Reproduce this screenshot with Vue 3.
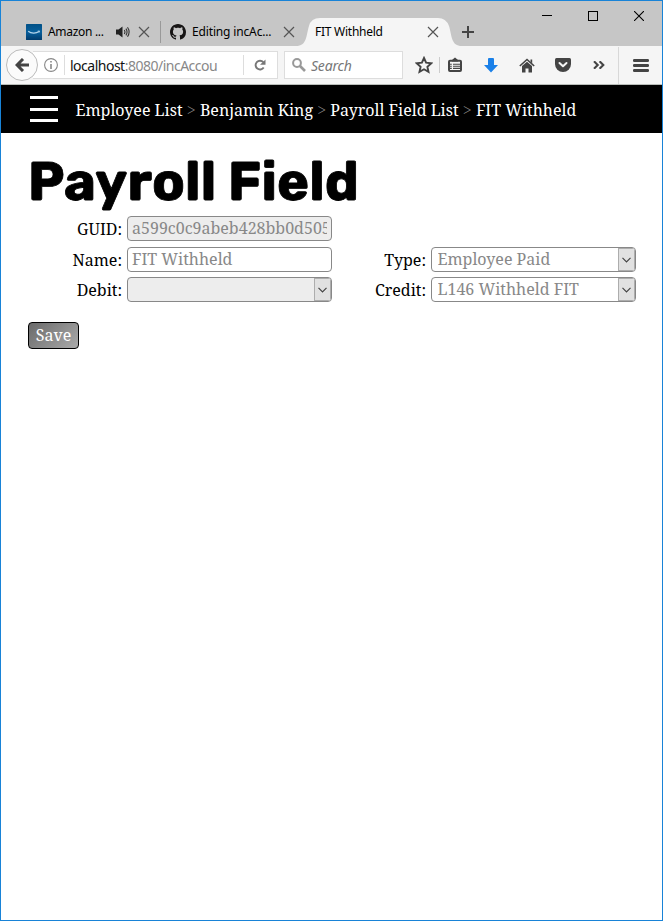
<script setup>
const tabs = [
  { title: 'Amazon ...', icon: 'amazon', audio: true },
  { title: 'Editing incAc...', icon: 'github', audio: false },
]
const crumbs = ['Employee List', 'Benjamin King', 'Payroll Field List', 'FIT Withheld']
</script>

<template>
  <div class="window">
    <header class="titlebar">
      <div v-for="t in tabs" :key="t.icon" class="tab" :class="t.icon">
        <svg v-if="t.icon === 'amazon'" class="fav" width="16" height="16" viewBox="0 0 16 16">
          <defs><linearGradient id="az" x1="0" y1="0" x2="0" y2="1"><stop offset="0" stop-color="#005086" /><stop offset=".5" stop-color="#075f9c" /><stop offset="1" stop-color="#003b6c" /></linearGradient></defs>
          <rect width="16" height="16" rx=".5" fill="url(#az)" />
          <path d="M2.2 7.2C5.2 9.6 10 9.6 13 7.6" fill="none" stroke="#b4d4ea" stroke-width="1.2" /><path d="M11.8 7h1.9l-.6 1.6" fill="none" stroke="#b4d4ea" stroke-width=".8" />
        </svg>
        <svg v-else class="fav" width="16" height="16" viewBox="0 0 16 16">
          <path fill="#171515" d="M8 0C3.58 0 0 3.58 0 8c0 3.54 2.29 6.53 5.47 7.59.4.07.55-.17.55-.38 0-.19-.01-.82-.01-1.49-2.01.37-2.53-.49-2.69-.94-.09-.23-.48-.94-.82-1.13-.28-.15-.68-.52-.01-.53.63-.01 1.08.58 1.23.82.72 1.21 1.87.87 2.33.66.07-.52.28-.87.51-1.07-1.78-.2-3.64-.89-3.64-3.95 0-.87.31-1.59.82-2.15-.08-.2-.36-1.02.08-2.12 0 0 .67-.21 2.2.82.64-.18 1.32-.27 2-.27s1.36.09 2 .27c1.53-1.04 2.2-.82 2.2-.82.44 1.1.16 1.92.08 2.12.51.56.82 1.27.82 2.15 0 3.07-1.87 3.75-3.65 3.95.29.25.54.73.54 1.48 0 1.07-.01 1.93-.01 2.2 0 .21.15.46.55.38A8.01 8.01 0 0 0 16 8c0-4.42-3.58-8-8-8z" />
        </svg>
        <span class="title">{{ t.title }}</span>
        <svg v-if="t.audio" class="audio" width="14" height="12" viewBox="0 0 14 12">
          <path d="M0 3.5h2.5L6.5.5v11l-4-3H0z" fill="#222" />
          <path d="M8.3 4q1.3 2 0 4M9.9 2.6q2.3 3.4 0 6.8M11.5 1.3q3.2 4.7 0 9.4" fill="none" stroke="#333" stroke-width="1.1" />
        </svg>
        <svg class="x" width="12" height="12" viewBox="0 0 12 12"><path d="M1 1l10 10M11 1L1 11" stroke="#555" stroke-width="1.2" /></svg>
      </div>
      <div class="active">
        <svg class="shape" width="166" height="28" viewBox="0 0 166 28"><path d="M0 28C11 28 10 18 13 8Q15 0 24 0H142Q150 0 153 8C156 18 155 28 166 28z" fill="#f5f5f5" /></svg>
        <span class="title">FIT Withheld</span>
        <svg class="x" width="12" height="12" viewBox="0 0 12 12"><path d="M1 1l10 10M11 1L1 11" stroke="#555" stroke-width="1.2" /></svg>
      </div>
      <svg class="plus" width="12" height="12" viewBox="0 0 12 12"><path d="M6 0v12M0 6h12" stroke="#444" stroke-width="2" /></svg>
      <div class="controls">
        <svg width="10" height="10" viewBox="0 0 10 10"><path d="M0 4.5h10" stroke="#000" /></svg>
        <svg width="10" height="10" viewBox="0 0 10 10"><rect x=".5" y=".5" width="9" height="9" fill="none" stroke="#000" /></svg>
        <svg width="10" height="10" viewBox="0 0 10 10"><path d="M0 0l10 10M10 0L0 10" stroke="#000" stroke-width="1.1" /></svg>
      </div>
    </header>

    <div class="toolbar">
      <div class="back">
        <svg width="14" height="14" viewBox="0 0 14 14"><path d="M8 1L2 7l6 6M2 7h12" fill="none" stroke="#444" stroke-width="3" /></svg>
      </div>
      <div class="url">
        <svg class="info" width="14" height="14" viewBox="0 0 14 14"><circle cx="7" cy="7" r="6.4" fill="none" stroke="#888" stroke-width="1.1" /><path d="M7 3v1.6M7 6v5" stroke="#777" stroke-width="1.4" /></svg>
        <span class="address"><b>localhost</b>:8080/incAccou</span>
        <span class="reload">
          <svg width="12" height="12" viewBox="0 0 12 12"><path d="M9.3 3.2A4.4 4.4 0 1 0 9.7 8.5" fill="none" stroke="#777" stroke-width="1.9" /><path d="M11.5.5v5.2H6z" fill="#777" /></svg>
        </span>
      </div>
      <div class="search">
        <svg width="14" height="14" viewBox="0 0 14 14"><circle cx="5" cy="5" r="3.9" fill="none" stroke="#999" stroke-width="2" /><path d="M8 8l5 5" stroke="#999" stroke-width="2.6" /></svg>
        <span class="hint">Search</span>
      </div>
      <div class="icons">
        <svg width="18" height="18" viewBox="0 0 18 18"><path d="M9 2l2.1 4.7 5.2.6-3.9 3.5 1.1 5.1L9 13.3l-4.5 2.6 1.1-5.1-3.9-3.5 5.2-.6z" fill="none" stroke="#444" stroke-width="1.9" /></svg>
        <i class="sep"></i>
        <svg class="clip" width="14" height="16" viewBox="0 0 14 16"><rect x="1" y="3.8" width="12" height="10.2" rx="1" fill="none" stroke="#444" stroke-width="2" /><path d="M4 3L7 .5 10 3v1.5H4z" fill="#444" /><path d="M2 7.2h1.8M5 7.2h7M2 9.3h1.8M5 9.3h7M2 11.4h1.8M5 11.4h7" stroke="#444" stroke-width="1.1" /></svg>
        <svg class="down" width="14" height="15" viewBox="0 0 14 15"><path d="M4 1q0-1 1-1h4q1 0 1 1v6h4l-7 7.5L0 7h4z" fill="#1a80e8" /></svg>
        <svg class="home" width="16" height="15" viewBox="0 0 16 15"><path d="M.8 8L8 1.5 15.2 8" fill="none" stroke="#444" stroke-width="1.6" /><path d="M11.5 1.5h1.7v4l-1.7-1.6z" fill="#444" /><path d="M3 8l5-4.3L13 8v6.5H9.5v-4h-3v4H3z" fill="#444" /></svg>
        <svg class="pocket" width="16" height="14" viewBox="0 0 16 14"><path d="M1.5 0h13Q16 0 16 1.5V6a8 8 0 0 1-16 0V1.5Q0 0 1.5 0z" fill="#444" /><path d="M4.5 5L8 8.3 11.5 5" fill="none" stroke="#f5f5f5" stroke-width="2" stroke-linecap="round" stroke-linejoin="round" /></svg>
        <svg class="more" width="12" height="8" viewBox="0 0 12 8"><path d="M1 .3L4.7 4 1 7.7M6.6.3L10.3 4 6.6 7.7" fill="none" stroke="#444" stroke-width="2.1" /></svg>
        <i class="sep tall"></i>
        <svg class="menu" width="16" height="13" viewBox="0 0 16 13"><path d="M1.3 1.5h13.4M1.3 6.5h13.4M1.3 11.5h13.4" stroke="#444" stroke-width="2.8" stroke-linecap="round" /></svg>
      </div>
    </div>

    <nav class="crumbs">
      <div class="burger"><i></i><i></i><i></i></div>
      <p>
        <template v-for="(c, i) in crumbs" :key="c"><em v-if="i">&gt;</em><a>{{ c }}</a></template>
      </p>
    </nav>

    <main>
      <h1>Payroll Field</h1>
      <form>
        <div class="row guid">
          <label>GUID:</label>
          <div class="field off"><span class="text">a599c0c9abeb428bb0d505</span></div>
        </div>
        <div class="row">
          <label>Name:</label>
          <div class="field"><span class="text">FIT Withheld</span></div>
          <label>Type:</label>
          <div class="field select"><span class="text">Employee Paid</span><span class="arrow"><svg width="9" height="6" viewBox="0 0 9 6"><path d="M.5.8l4 4 4-4" fill="none" stroke="#444" stroke-width="1.2" /></svg></span></div>
        </div>
        <div class="row">
          <label>Debit:</label>
          <div class="field select off"><span class="text"></span><span class="arrow"><svg width="9" height="6" viewBox="0 0 9 6"><path d="M.5.8l4 4 4-4" fill="none" stroke="#444" stroke-width="1.2" /></svg></span></div>
          <label>Credit:</label>
          <div class="field select"><span class="text">L146 Withheld FIT</span><span class="arrow"><svg width="9" height="6" viewBox="0 0 9 6"><path d="M.5.8l4 4 4-4" fill="none" stroke="#444" stroke-width="1.2" /></svg></span></div>
        </div>
        <button type="button">Save</button>
      </form>
    </main>
  </div>
</template>

<style>
body { background: #fff; }
</style>

<style scoped>
* { box-sizing: border-box; }
svg { display: block; flex: none; }
.window {
  width: 663px; height: 921px; border: 1px solid #1883d7; background: #fff; overflow: hidden;
  font-family: "Noto Serif", "Droid Serif", "DejaVu Serif Condensed", "DejaVu Serif", serif;
}
.titlebar { height: 45px; background: #c6c6c6; display: flex; align-items: flex-end; font: 12px/28px "Noto Sans", sans-serif; color: #000; }
.tab { height: 28px; display: flex; align-items: center; flex: none; white-space: nowrap; }
.amazon { width: 160px; padding-left: 25px; border-right: 1px solid #999; height: 22px; margin-bottom: 3px; }
.github { width: 137px; padding-left: 9px; }
.fav { margin-right: 6px; }
.amazon .title { width: 68px; letter-spacing: -.3px; }
.github .title { width: 91px; margin-right: 1px; letter-spacing: -.15px; }
.audio { margin-right: 8px; }
.github .title + .x { margin-left: -1px; }
.active { position: relative; z-index: 1; width: 166px; height: 28px; flex: none; display: flex; align-items: center; margin-left: -2px; }
.shape { position: absolute; inset: 0; }
.active .title { position: relative; margin-left: 19px; width: 112px; letter-spacing: -.25px; }
.active .x { position: relative; }
.plus { margin: 0 0 8px 0; }
.controls { margin-left: auto; align-self: flex-start; display: flex; gap: 36px; padding: 10px 18px 0 0; }
.toolbar { height: 39px; background: #f5f5f5; border-bottom: 1px solid #b9bdb9; display: flex; align-items: center; font-family: "Noto Sans", sans-serif; }
.back { width: 32px; height: 32px; margin-left: 5px; border: 1px solid #bbb; border-radius: 50%; background: #fbfbfb; display: flex; align-items: center; justify-content: center; flex: none; z-index: 1; }
.url { width: 245px; height: 28px; margin-left: -5px; border: 1px solid #ddd; border-left: 0; background: #fff; display: flex; align-items: center; flex: none; padding-left: 11px; }
.address { margin-left: 6px; padding-left: 5px; border-left: 1px solid #ddd; width: 179px; height: 20px; line-height: 22px; font-size: 14px; color: #888; letter-spacing: -.5px; white-space: nowrap; }
.address b { font-weight: 400; color: #111; }
.reload { flex: 1; height: 20px; border-left: 1px solid #ddd; display: flex; align-items: center; padding-left: 10px; }
.search { width: 119px; height: 28px; margin-left: 6px; border: 1px solid #ddd; background: #fff; display: flex; align-items: center; padding-left: 7px; flex: none; }
.hint { margin-left: 5px; font: italic 14px/22px "Noto Sans", sans-serif; color: #777; letter-spacing: -.2px; padding-top: 1px; }
.icons { flex: 1; display: flex; align-items: center; padding-left: 12px; height: 38px; }
.sep { width: 1px; height: 16px; background: #ccc; margin: 0 8px 0 6px; }
.down { margin-left: 22px; }
.home { margin-left: 21px; }
.pocket { margin-left: 20px; }
.more { margin-left: 22px; margin-right: 8px; }
.sep.tall { height: 37px; background: #d8d8d8; margin: 0 14px 0 5px; }
.crumbs { height: 48px; background: #000; display: flex; align-items: center; }
.burger { width: 28px; height: 26px; margin: 0 17.5px 0 29px; display: flex; flex-direction: column; justify-content: space-between; }
.burger i { height: 3px; background: #fff; }
.crumbs p { margin: 2px 0 0; color: #fff; font-size: 16px; line-height: 22px; white-space: nowrap; }
.crumbs em { font-style: normal; font-weight: 300; color: #858585; margin: 0 4.2px; }
main { padding: 21px 26px 0 27px; }
h1 { margin: 0; font: 700 54px/56px Rubik, Inter, sans-serif; letter-spacing: .15px; color: #000; -webkit-text-stroke: .8px #000; white-space: nowrap; }
form { padding-top: 6px; color: #000; font-size: 16px; }
.row { display: flex; height: 25px; margin-bottom: 5px; }
.row.guid { margin-bottom: 6px; }
label { width: 94px; margin-right: 5px; text-align: right; line-height: 26px; white-space: nowrap; flex: none; }
.field { flex: none; width: 205px; height: 25px; border: 1px solid #888; border-radius: 4px; background: #fff; color: #888; display: flex; padding: 0 4px; line-height: 23px; }
.field.off { background: #ededed; }
.text { flex: 1; min-width: 0; overflow: hidden; white-space: nowrap; }
.select { padding: 0 0 0 5.5px; overflow: hidden; }
.arrow { width: 17px; background: #e1e1e1; border: 1px solid #adadad; display: flex; align-items: center; justify-content: center; }
button { display: block; width: 51px; height: 27px; margin: 20px 0 0; padding: 0; border: 1px solid #000; border-radius: 4px; background: linear-gradient(135deg, #6a6a6a, #aaa); color: #fff; font: 16px/23px "Noto Serif", "Droid Serif", "DejaVu Serif Condensed", "DejaVu Serif", serif; }
</style>
